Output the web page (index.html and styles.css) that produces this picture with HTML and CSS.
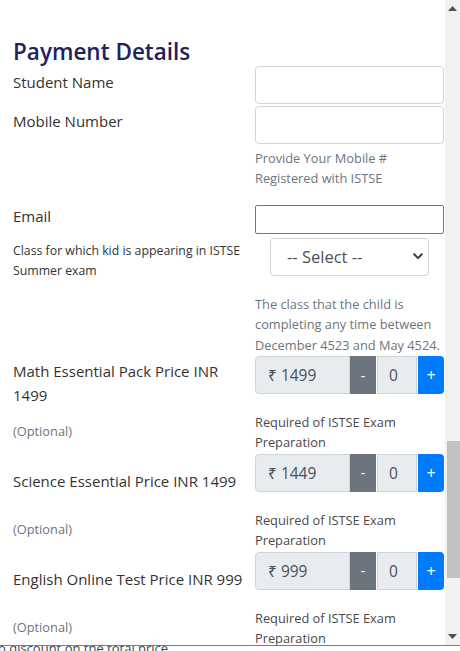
FILE: index.html
```html
<!DOCTYPE html>
<html lang="en">
<head>
<meta charset="utf-8">
<title>Payment Details</title>
<link rel="stylesheet" href="styles.css">
</head>
<body>
<div class="page">
  <div class="viewport">
    <div class="content">
      <h2 class="title">Payment Details</h2>

      <div class="field-row row-student">
        <label class="label lbl-a">Student Name</label>
        <div class="input"></div>
      </div>

      <div class="field-row row-mobile">
        <label class="label lbl-b">Mobile Number</label>
        <div class="col">
          <div class="input"></div>
          <div class="help help-mobile">Provide Your Mobile # Registered with ISTSE</div>
        </div>
      </div>

      <div class="field-row row-email">
        <label class="label lbl-c">Email</label>
        <div class="input input-plain"></div>
      </div>

      <div class="field-row row-class">
        <label class="label label-small">Class for which kid is appearing in ISTSE Summer exam</label>
        <div class="col">
          <div class="select-wrap">
            <div class="select">
              <span>-- Select --</span>
              <svg class="chev" width="10" height="7" viewBox="0 0 10 7"><path d="M1.2 1.3 L5 5.1 L8.8 1.3" fill="none" stroke="#343a40" stroke-width="2" stroke-linecap="round" stroke-linejoin="round"/></svg>
            </div>
          </div>
          <div class="help help-class">The class that the child is completing any time between December 4523 and May 4524.</div>
        </div>
      </div>

      <div class="item item-first">
        <div class="label">Math Essential Pack Price INR 1499</div>
        <div class="price-group">
          <div class="price">₹ 1499</div>
          <div class="btn minus">-</div>
          <div class="qty">0</div>
          <div class="btn plus">+</div>
        </div>
        <div class="optional">(Optional)</div>
        <div class="required">Required of ISTSE Exam Preparation</div>
      </div>

      <div class="item">
        <div class="label">Science Essential Price INR 1499</div>
        <div class="price-group">
          <div class="price">₹ 1449</div>
          <div class="btn minus">-</div>
          <div class="qty">0</div>
          <div class="btn plus">+</div>
        </div>
        <div class="optional">(Optional)</div>
        <div class="required">Required of ISTSE Exam Preparation</div>
      </div>

      <div class="item">
        <div class="label">English Online Test Price INR 999</div>
        <div class="price-group">
          <div class="price">₹ 999</div>
          <div class="btn minus">-</div>
          <div class="qty">0</div>
          <div class="btn plus">+</div>
        </div>
        <div class="optional">(Optional)</div>
        <div class="required">Required of ISTSE Exam Preparation</div>
      </div>
    </div>

    <div class="scrollbar">
      <div class="arrow"><svg width="9" height="5" viewBox="0 0 9 5"><path d="M0 5 L4.5 0 L9 5 Z" fill="#505050"/></svg></div>
      <div class="track"><div class="thumb"></div></div>
      <div class="arrow"><svg width="9" height="5" viewBox="0 0 9 5"><path d="M0 0 L4.5 5 L9 0 Z" fill="#505050"/></svg></div>
    </div>
  </div>
  <div class="below"><div class="below-text">o discount on the total price.</div></div>
</div>
</body>
</html>
```

FILE: styles.css
```css
* { box-sizing: border-box; }

html, body {
  margin: 0;
  padding: 0;
  background: #fff;
}

body {
  width: 460px;
  height: 651px;
  overflow: hidden;
  font-family: "Open Sans", "Noto Sans", "DejaVu Sans", sans-serif;
  color: #212529;
}

.page {
  display: flex;
  flex-direction: column;
  height: 651px;
}

.viewport {
  display: flex;
  height: 646px;
  border-bottom: 1px solid #7d7d7d;
  overflow: hidden;
  flex: none;
}

.content {
  width: 445px;
  padding: 0 1px 0 13px;
  overflow: hidden;
}

.title {
  margin: 37px 0 0;
  font-size: 22.5px;
  line-height: 29px;
  font-weight: 600;
  color: #22225a;
}

.field-row {
  display: grid;
  grid-template-columns: 236px 189px;
  column-gap: 6px;
  align-items: start;
}

.row-student { margin-top: 0; }
.row-mobile { margin-top: 2px; }
.row-email { margin-top: 16px; }
.row-class { margin-top: 4px; }

.label {
  font-size: 15px;
  line-height: 24px;
  color: #333;
}

.lbl-a { margin-top: 4px; }
.lbl-b { margin-top: 3px; }
.lbl-c { margin-top: -1px; }

.label-small {
  font-size: 12.3px;
  line-height: 20px;
  margin-top: 3px;
}

.col {
  display: flex;
  flex-direction: column;
}

.input {
  height: 38px;
  border: 1px solid #ced4da;
  border-radius: 4px;
  background: #fff;
}

.input-plain {
  height: 29px;
  border: 1px solid #767676;
  border-radius: 2px;
}

.help {
  font-size: 12.8px;
  line-height: 20.4px;
  color: #6c757d;
}

.help-mobile { margin-top: 4px; }
.help-class { margin-top: 18px; }

.select-wrap {
  padding: 0 15px;
}

.select {
  height: 38px;
  border: 1px solid #ced4da;
  border-radius: 4px;
  display: flex;
  align-items: center;
  justify-content: space-between;
  padding: 0 5px 0 16px;
  font-size: 16.5px;
  color: #495057;
}

.item {
  display: grid;
  grid-template-columns: 236px 189px;
  column-gap: 6px;
  align-items: center;
  margin-top: 1px;
}

.price-group {
  display: flex;
  height: 38px;
  margin-bottom: 16px;
  font-size: 15.5px;
  color: #495057;
}

.price {
  width: 95px;
  background: #e9ecef;
  border: 1px solid #ced4da;
  border-radius: 4px 0 0 4px;
  display: flex;
  align-items: center;
  padding-left: 12px;
}

.btn {
  width: 26px;
  display: flex;
  align-items: center;
  justify-content: center;
  color: #fff;
  font-size: 14px;
}

.minus {
  background: #6c757d;
}

.qty {
  width: 40px;
  margin-left: 1px;
  background: #e9ecef;
  border: 1px solid #ced4da;
  display: flex;
  align-items: center;
  padding-left: 11px;
}

.plus {
  margin-left: 1px;
  background: #007bff;
  border-radius: 0 4px 4px 0;
  font-size: 16px;
}

.optional {
  font-size: 12.8px;
  line-height: 20px;
  color: #6c757d;
}

.required {
  margin-top: 2px;
  font-size: 12.8px;
  line-height: 20.4px;
  color: #4a4a4a;
}

.scrollbar {
  width: 15px;
  flex: none;
  background: #f1f1f1;
  display: flex;
  flex-direction: column;
}

.arrow {
  height: 17px;
  display: flex;
  align-items: center;
  justify-content: center;
  flex: none;
}

.track {
  flex: 1;
  padding-left: 2px;
}

.thumb {
  margin-top: 424px;
  height: 137px;
  background: #c1c1c1;
}

.below {
  height: 5px;
  overflow: hidden;
  flex: none;
}

.below-text {
  margin: -7px 0 0 -2px;
  font-size: 13px;
  line-height: 18px;
  color: #444;
}
```
